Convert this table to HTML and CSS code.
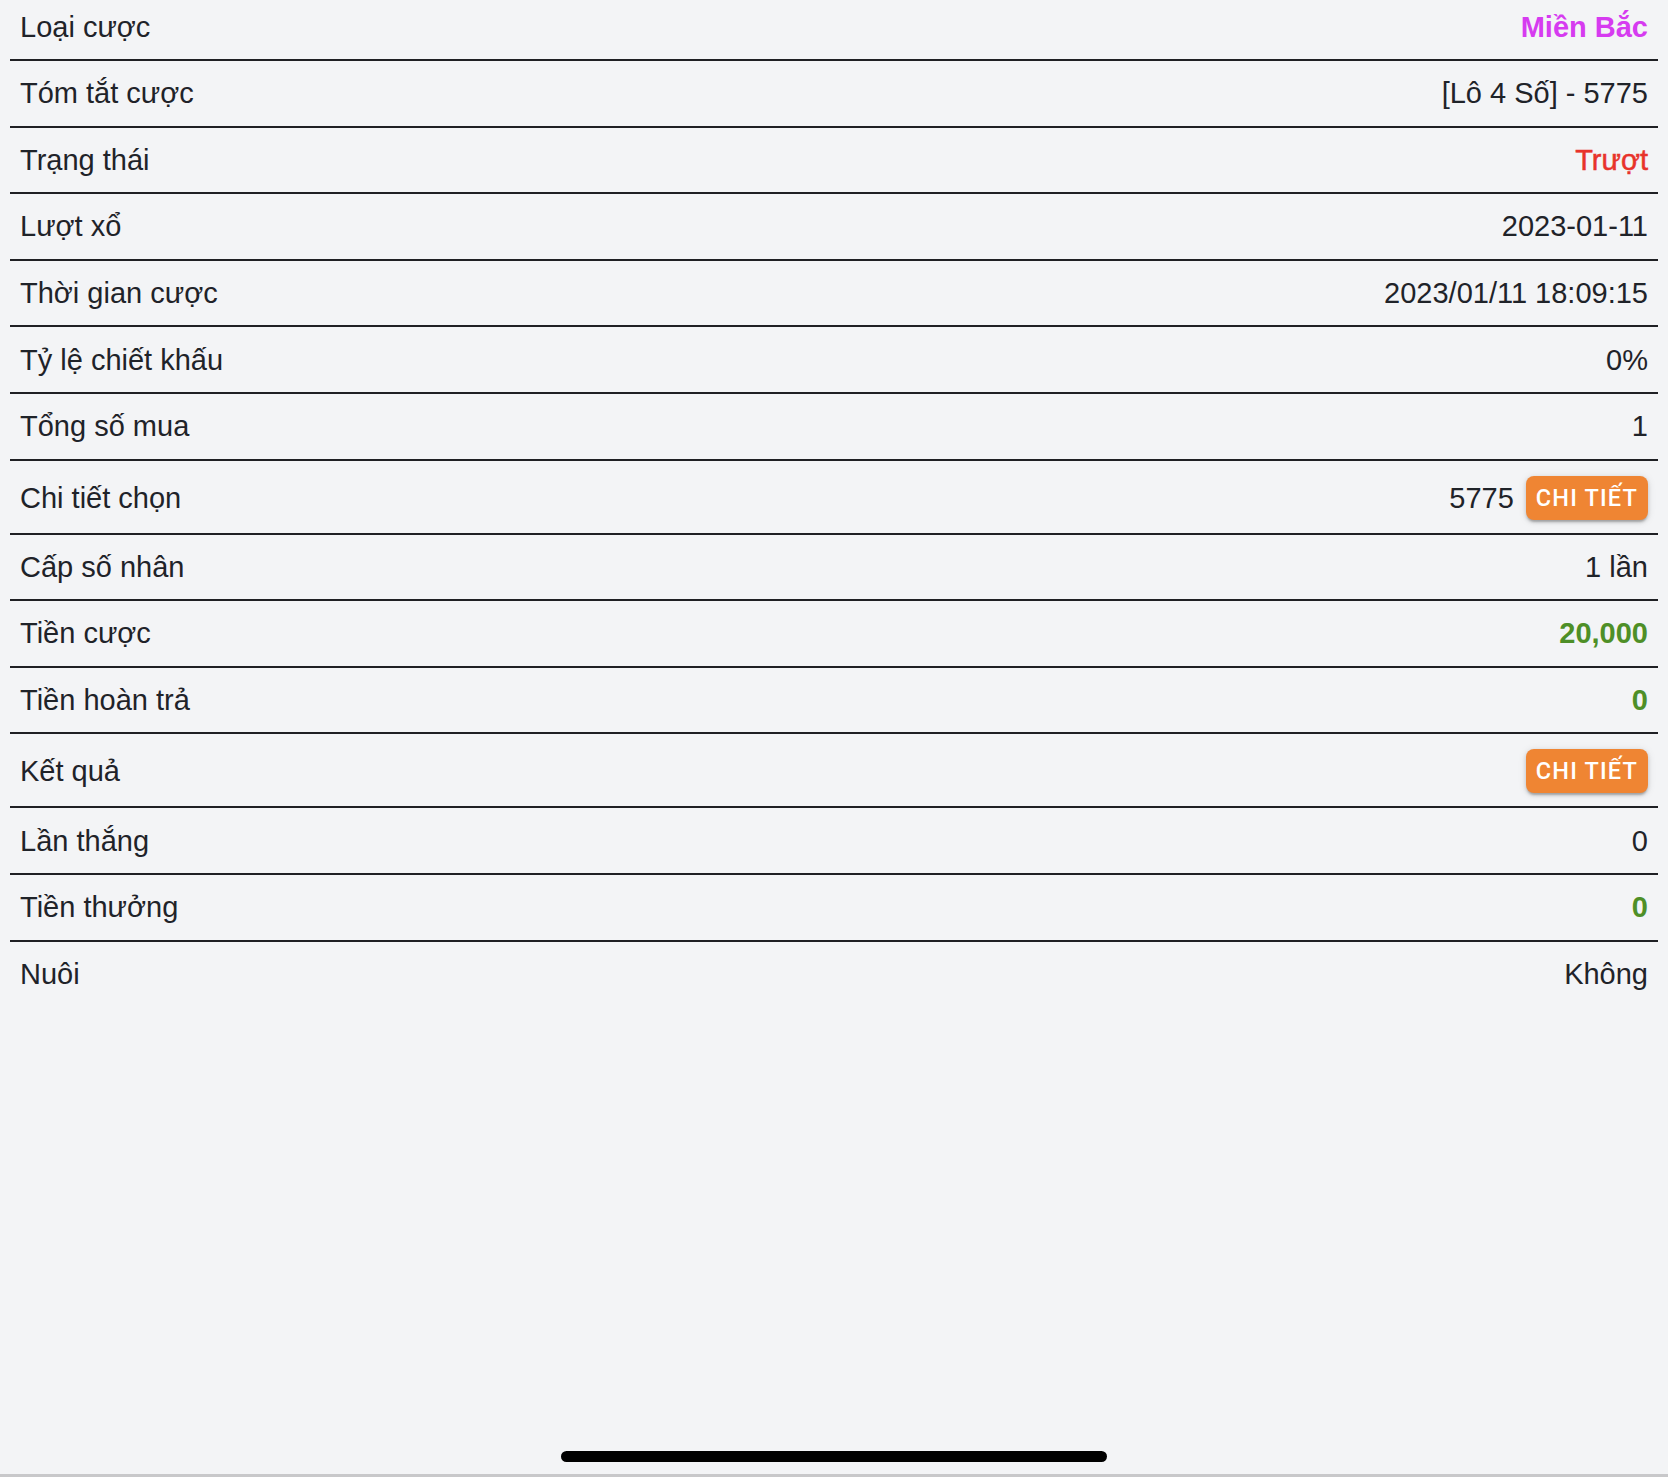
FILE: index.html
```html
<html>
<head>
<meta http-equiv="Content-Type" content="text/html; charset=utf-8"/>
<title>Chi tiết cược</title>
<link rel="stylesheet" href="styles.css">
</head>

<body>
<div id="main">

<div class="detail">
<div class="row"><span class="label">Loại cược</span><span class="value region">Miền Bắc</span></div>
<div class="row"><span class="label">Tóm tắt cược</span><span class="value">[Lô 4 Số] - 5775</span></div>
<div class="row"><span class="label">Trạng thái</span><span class="value lost">Trượt</span></div>
<div class="row"><span class="label">Lượt xổ</span><span class="value">2023-01-11</span></div>
<div class="row"><span class="label">Thời gian cược</span><span class="value">2023/01/11 18:09:15</span></div>
<div class="row"><span class="label">Tỷ lệ chiết khấu</span><span class="value">0%</span></div>
<div class="row"><span class="label">Tổng số mua</span><span class="value">1</span></div>
<div class="row withbtn"><span class="label">Chi tiết chọn</span><span class="value">5775 <button class="more">Chi tiết</button></span></div>
<div class="row"><span class="label">Cấp số nhân</span><span class="value">1 lần</span></div>
<div class="row"><span class="label">Tiền cược</span><span class="value money">20,000</span></div>
<div class="row"><span class="label">Tiền hoàn trả</span><span class="value money">0</span></div>
<div class="row withbtn"><span class="label">Kết quả</span><span class="value"><button class="more">Chi tiết</button></span></div>
<div class="row"><span class="label">Lần thắng</span><span class="value">0</span></div>
<div class="row"><span class="label">Tiền thưởng</span><span class="value money">0</span></div>
<div class="row"><span class="label">Nuôi</span><span class="value">Không</span></div>
</div> <!-- detail -->

</div> <!-- main -->

<div class="homebar"></div>
</body>
</html>
```

FILE: styles.css
```css
html, body {
	height: 100%;
}

body {
	margin: 0;
	padding: 0;
	background: #f3f4f6;
	color: #1f2329;
	font-family: "Liberation Sans", Arial, sans-serif;
	font-size: 29px;
	overflow: hidden;
	box-sizing: border-box;
	border-bottom: 3px solid #c8c8ca;
}

#main {
	margin: 0;
	padding: 0;
}

.detail {
	margin: -5.6px 10px 0 10px;
}

.row {
	display: flex;
	justify-content: space-between;
	align-items: center;
	min-height: 64.6px;
	padding: 0 10px 0 10px;
	border-bottom: 2px solid #1f2024;
	line-height: 34px;
}

.row:last-child {
	border-bottom: none;
}

.row.withbtn {
	padding-top: 15px;
	padding-bottom: 13px;
	min-height: 44px;
}

.value {
	display: flex;
	align-items: center;
	text-align: right;
}

.region {
	color: #d63bf0;
	font-weight: bold;
}

.lost {
	color: #e8322b;
	-webkit-text-stroke: 0.5px #e8322b;
}

.money {
	color: #4e8f27;
	font-weight: bold;
}

.more {
	height: 44px;
	margin-left: 12px;
	padding: 0 10px;
	border: none;
	border-radius: 8px;
	background: #ef8533;
	color: #fff;
	font-family: Roboto, "Liberation Sans", sans-serif;
	font-weight: 500;
	font-size: 23.5px;
	letter-spacing: 0.05em;
	text-transform: uppercase;
	box-shadow: 0 3px 2px -1px rgba(0, 0, 0, 0.2), 0 2px 4px 0 rgba(0, 0, 0, 0.14), 0 1px 8px 0 rgba(0, 0, 0, 0.1);
	cursor: pointer;
}

.homebar {
	position: fixed;
	left: 561px;
	bottom: 15px;
	width: 546px;
	height: 11px;
	border-radius: 6px;
	background: #000;
}
```
